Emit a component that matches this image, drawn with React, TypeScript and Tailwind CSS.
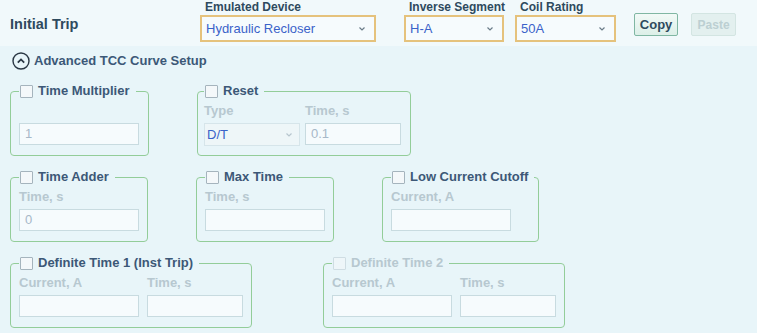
import React from 'react';

const font = { fontFamily: '"Liberation Sans", Arial, sans-serif' };

const Chevron = ({ className = '' }: { className?: string }) => (
  <svg width="8" height="6" viewBox="0 0 8 6" className={className}>
    <path d="M1.5 1.5 L4 4 L6.5 1.5" fill="none" stroke="currentColor" strokeWidth="1.2" />
  </svg>
);

const HeaderSelect = ({ label, value, width }: { label: string; value: string; width: string }) => (
  <div className="flex flex-col">
    <span className="text-[12px] font-bold leading-[14px] text-[#2e4a5e] pl-[5px]">{label}</span>
    <div
      className={`mt-[1px] h-[27px] ${width} flex items-center justify-between border-2 border-[#e5c27c] bg-[#f6fbfd] pl-[4px] pr-[8px]`}
    >
      <span className="text-[13px] text-[#3a62c9]">{value}</span>
      <Chevron className="text-[#6b7c88]" />
    </div>
  </div>
);

const Checkbox = ({ disabled }: { disabled?: boolean }) => (
  <span
    className={`inline-block h-[13px] w-[13px] shrink-0 rounded-[1px] border ${
      disabled ? 'border-[#cfdde3] bg-[#eef6f9]' : 'border-[#a5b4bd] bg-[#f4f8fa]'
    }`}
  />
);

const Input = ({ value = '', width }: { value?: string; width: string }) => (
  <div
    className={`h-[22px] ${width} flex items-center border border-[#c8dbe0] bg-[#f6fbfd] px-[5px] text-[13px] text-[#a7b8c8]`}
  >
    {value}
  </div>
);

const Label = ({ children }: { children: React.ReactNode }) => (
  <span className="block h-[16px] whitespace-nowrap text-[13px] font-bold leading-[16px] text-[#b7c8d0]">
    {children}
  </span>
);

const Group = ({
  title,
  width,
  disabled,
  px = 'px-[8px]',
  children,
}: {
  title: string;
  width: string;
  disabled?: boolean;
  px?: string;
  children: React.ReactNode;
}) => (
  <fieldset className={`${width} ${px} min-w-0 h-[73px] rounded-[4px] border border-[#93cd99] pb-[8px] pt-[4px]`}>
    <legend className="flex h-[16px] items-center gap-[5px] whitespace-nowrap pl-[1px] pr-[6px]">
      <Checkbox disabled={disabled} />
      <span
        className={`text-[13px] font-bold leading-[16px] ${disabled ? 'text-[#b7c8d0]' : 'text-[#3c5877]'}`}
      >
        {title}
      </span>
    </legend>
    {children}
  </fieldset>
);

const Field = ({ label, children }: { label?: string; children: React.ReactNode }) => (
  <div className="flex flex-col gap-[4px]">
    <Label>{label ?? ''}</Label>
    {children}
  </div>
);

export default function App() {
  return (
    <div className="w-[757px] h-[333px] bg-[#e8f5f9] overflow-hidden" style={font}>
      {/* header */}
      <div className="h-[46px] bg-[#f1f9fb] flex items-start">
        <div className="w-[200px] pl-[10px] pt-[14px] text-[14.5px] font-bold text-[#2e4a5e]">Initial Trip</div>
        <div className="flex items-start gap-[28px]">
          <HeaderSelect label="Emulated Device" value="Hydraulic Recloser" width="w-[176px]" />
          <div className="flex gap-[10px]">
            <HeaderSelect label="Inverse Segment" value="H-A" width="w-[100px]" />
            <HeaderSelect label="Coil Rating" value="50A" width="w-[101px]" />
          </div>
        </div>
        <div className="flex gap-[13px] pt-[13px] pl-[18px]">
          <button className="h-[23px] w-[44px] rounded-[2px] border border-[#80b7a3] bg-gradient-to-b from-[#f2faf7] to-[#dcefe8] text-[13px] font-bold text-[#2e4a5e]">
            Copy
          </button>
          <button className="h-[23px] w-[45px] rounded-[2px] border border-[#d3e5e2] bg-[#e3f0ef] text-[12px] font-bold text-[#bccfd2]">
            Paste
          </button>
        </div>
      </div>

      {/* advanced section */}
      <div className="h-[30px] flex items-center gap-[4px] pl-[12px]">
        <svg width="18" height="18" viewBox="0 0 18 18">
          <circle cx="9" cy="9" r="8" fill="none" stroke="#2a3744" strokeWidth="1.4" />
          <path d="M5.8 10.6 L9 7.4 L12.2 10.6" fill="none" stroke="#2a3744" strokeWidth="1.8" />
        </svg>
        <span className="text-[13px] font-bold text-[#3c5877]">Advanced TCC Curve Setup</span>
      </div>

      <div className="flex flex-col gap-[13px] pl-[10px] pt-[7px]">
        <div className="flex gap-[48px]">
          <Group title="Time Multiplier" width="w-[139px]">
            <Field>
              <Input value="1" width="w-[120px]" />
            </Field>
          </Group>
          <Group title="Reset" width="w-[214px]" px="px-[6px]">
            <div className="flex gap-[5px]">
              <Field label="Type">
                <div className="h-[23px] w-[96px] flex items-center justify-between border border-[#d6e5ea] bg-[#eef6f8] pl-[2px] pr-[6px] text-[13px] text-[#3a62c9]">
                  D/T
                  <Chevron className="text-[#b7c6ce]" />
                </div>
              </Field>
              <Field label="Time, s">
                <Input value="0.1" width="w-[96px]" />
              </Field>
            </div>
          </Group>
        </div>

        <div className="flex gap-[48px]">
          <Group title="Time Adder" width="w-[138px]">
            <Field label="Time, s">
              <Input value="0" width="w-[120px]" />
            </Field>
          </Group>
          <Group title="Max Time" width="w-[138px]">
            <Field label="Time, s">
              <Input width="w-[120px]" />
            </Field>
          </Group>
          <Group title="Low Current Cutoff" width="w-[157px]">
            <Field label="Current, A">
              <Input width="w-[120px]" />
            </Field>
          </Group>
        </div>

        <div className="flex gap-[71px]">
          <Group title="Definite Time 1 (Inst Trip)" width="w-[242px]">
            <div className="flex gap-[8px]">
              <Field label="Current, A">
                <Input width="w-[120px]" />
              </Field>
              <Field label="Time, s">
                <Input width="w-[96px]" />
              </Field>
            </div>
          </Group>
          <Group title="Definite Time 2" width="w-[242px]" disabled>
            <div className="flex gap-[8px]">
              <Field label="Current, A">
                <Input width="w-[120px]" />
              </Field>
              <Field label="Time, s">
                <Input width="w-[96px]" />
              </Field>
            </div>
          </Group>
        </div>
      </div>
    </div>
  );
}
